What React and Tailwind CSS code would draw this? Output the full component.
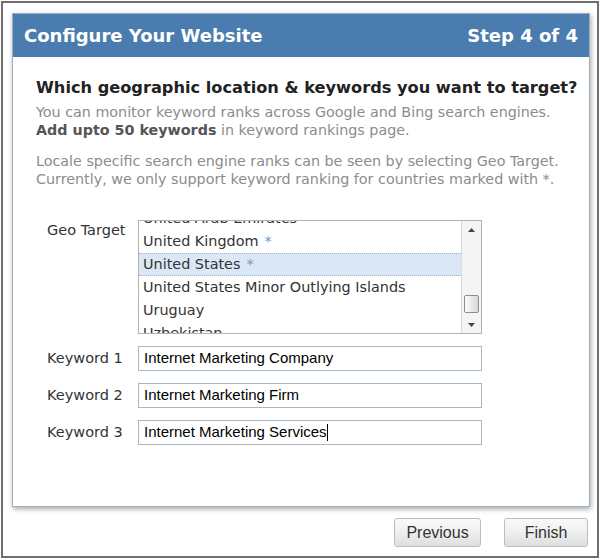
import React from "react";

const countries = [
  { name: "United Arab Emirates" },
  { name: "United Kingdom", star: true },
  { name: "United States", star: true, selected: true },
  { name: "United States Minor Outlying Islands" },
  { name: "Uruguay" },
  { name: "Uzbekistan" },
];

const keywords = [
  "Internet Marketing Company",
  "Internet Marketing Firm",
  "Internet Marketing Services",
];

const App = () => {
  return (
    <div className="w-[600px] h-[560px] bg-white p-px font-['DejaVu_Sans',sans-serif]">
      <div className="h-[557px] border-2 border-[#6f6f6f] pt-[10px] pl-[9px] pr-[6px]">
        {/* Main panel */}
        <div className="w-[578px] h-[494px] bg-white border border-[#9db0c4] shadow-[1px_2px_5px_rgba(0,0,0,0.35)]">
          <div className="h-[43px] bg-[#4a7cb0] flex items-center justify-between px-[11px] text-white font-bold text-[18px]">
            <span>Configure Your Website</span>
            <span>Step 4 of 4</span>
          </div>

          <div className="pl-[23px] pr-[4px] pt-[21px]">
            <h2 className="font-bold text-[16.2px] text-[#222] leading-[20px] whitespace-nowrap">
              Which geographic location &amp; keywords you want to target?
            </h2>
            <p className="mt-[5px] text-[14.3px] leading-[18px] text-[#8c8c8c] whitespace-nowrap">
              You can monitor keyword ranks across Google and Bing search engines.
              <br />
              <b className="text-[#555]">Add upto 50 keywords</b> in keyword rankings page.
            </p>
            <p className="mt-[13px] text-[14.3px] leading-[18px] text-[#8c8c8c] whitespace-nowrap">
              Locale specific search engine ranks can be seen by selecting Geo Target.
              <br />
              Currently, we only support keyword ranking for countries marked with *.
            </p>

            {/* Geo target */}
            <div className="mt-[32px] flex text-[14.5px] text-[#333]">
              <div className="w-[102px] pl-[11px] leading-[18px] pt-[1px]">Geo Target</div>
              <div className="w-[344px] h-[114px] border border-[#b3b3b3] flex overflow-hidden">
                <div className="flex-1 overflow-hidden">
                  <div className="-mt-[14px]">
                    {countries.map((c) => (
                      <div
                        key={c.name}
                        className={
                          "h-[23px] flex items-center pl-[4px] text-[14.4px] whitespace-nowrap " +
                          (c.selected ? "bg-[#dce7f6] border-y border-dotted border-[#9fb6d4]" : "")
                        }
                      >
                        {c.name}
                        {c.star && <span className="ml-[6px] text-[#6f96c8]">*</span>}
                      </div>
                    ))}
                  </div>
                </div>
                <div className="w-[20px] border-l border-[#dcdcdc] bg-[#f4f4f4] flex flex-col items-center justify-between py-[4px]">
                  <svg width="7" height="4" viewBox="0 0 7 4" className="mt-[3px]">
                    <path d="M0 4 L3.5 0 L7 4 Z" fill="#444" />
                  </svg>
                  <div className="flex flex-col items-center gap-[10px]">
                    <div className="w-[15px] h-[18px] rounded-[2px] border border-[#8d8d8d] bg-gradient-to-r from-[#fdfdfd] to-[#d8d8d8]" />
                    <svg width="7" height="4" viewBox="0 0 7 4" className="mb-[2px]">
                      <path d="M0 0 L3.5 4 L7 0 Z" fill="#444" />
                    </svg>
                  </div>
                </div>
              </div>
            </div>

            {/* Keywords */}
            <div className="mt-[12px] flex flex-col gap-[12px]">
              {keywords.map((k, i) => (
                <div key={k} className="flex items-center text-[14.5px] text-[#333]">
                  <div className="w-[102px] pl-[11px]">Keyword {i + 1}</div>
                  <div className="w-[344px] h-[25px] border border-[#a9b6c4] flex items-center pl-[5px] font-['Liberation_Sans',sans-serif] text-[15px] text-black">
                    {k}
                    {i === 2 && <span className="w-px h-[17px] bg-black" />}
                  </div>
                </div>
              ))}
            </div>
          </div>
        </div>

        {/* Footer buttons */}
        <div className="mt-[11px] flex justify-end gap-[23px] pr-[3px] font-['Liberation_Sans',sans-serif] text-[16px] text-[#333]">
          <button className="w-[87px] h-[29px] rounded-[3px] border border-[#bdbdbd] bg-gradient-to-b from-[#fafafa] via-[#efefef] to-[#dedede]">
            Previous
          </button>
          <button className="w-[84px] h-[29px] rounded-[3px] border border-[#bdbdbd] bg-gradient-to-b from-[#fafafa] via-[#efefef] to-[#dedede]">
            Finish
          </button>
        </div>
      </div>
    </div>
  );
};

export default App;
